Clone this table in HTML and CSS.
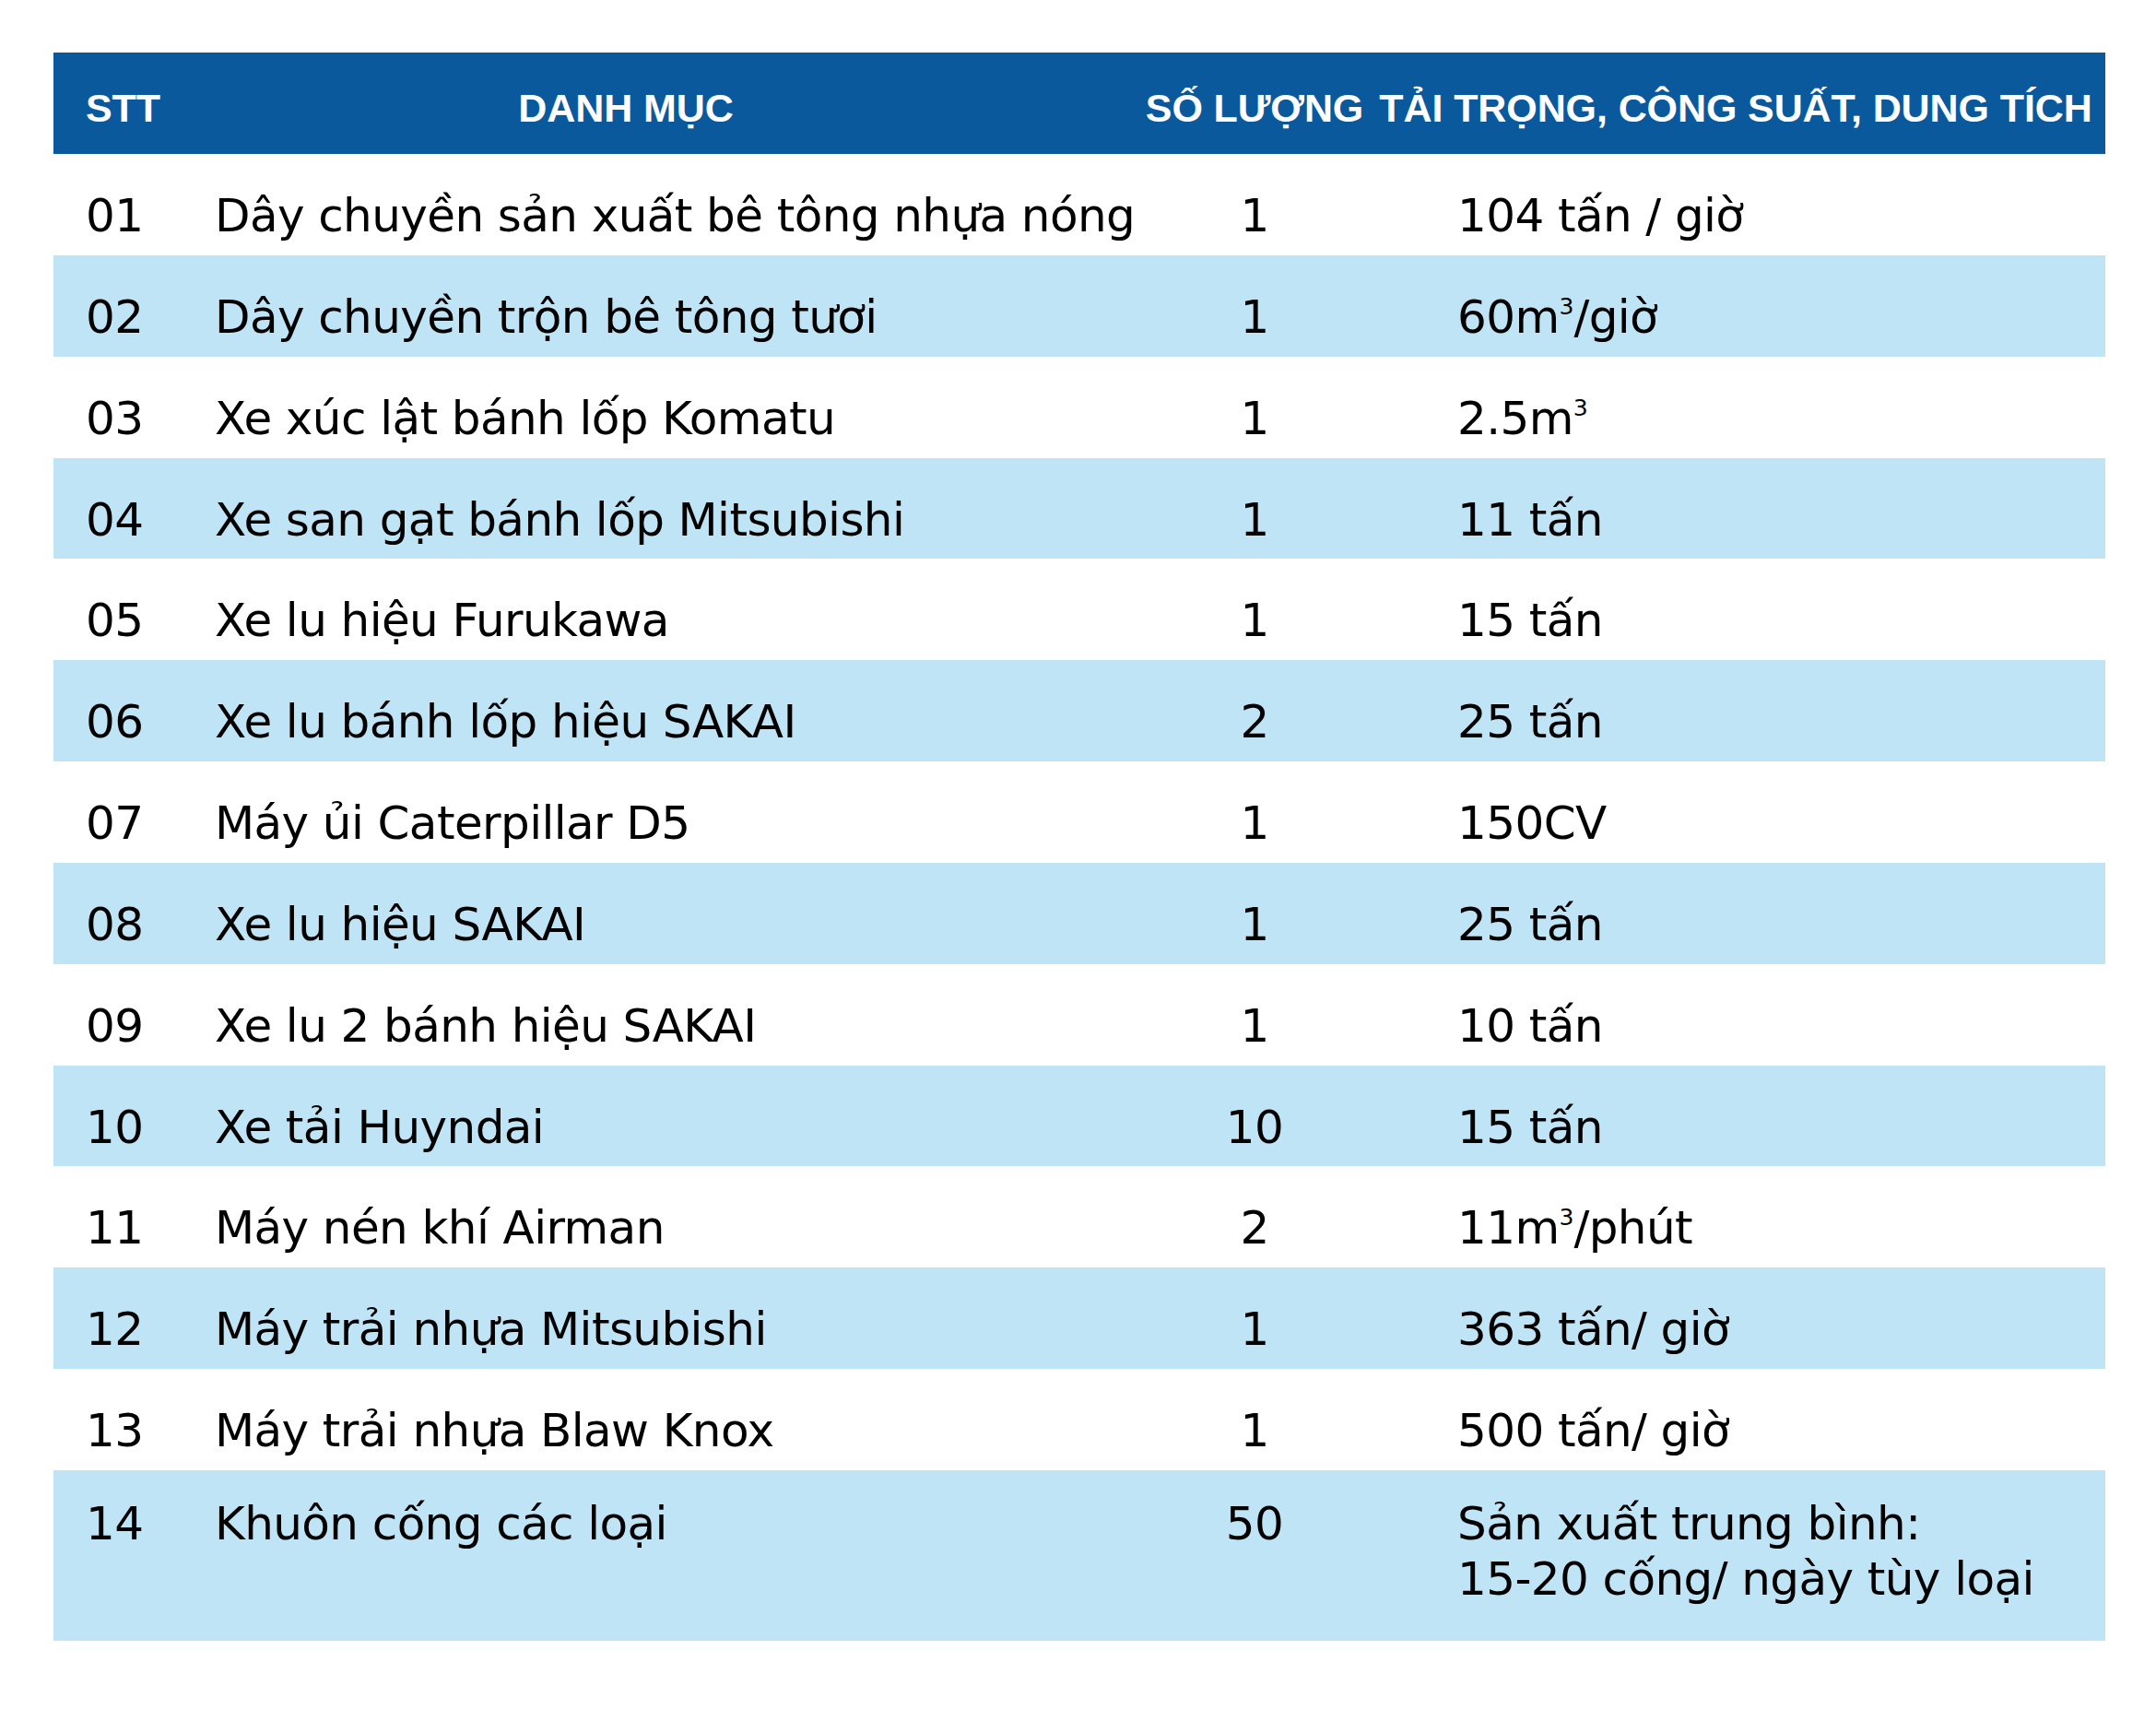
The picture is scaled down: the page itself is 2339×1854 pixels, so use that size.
FILE: index.html
```html
<!DOCTYPE html>
<html lang="vi">
<head>
<meta charset="utf-8">
<title>Danh mục thiết bị</title>
<link rel="stylesheet" href="styles.css">
</head>
<body>
<div class="table">
  <div class="row head">
    <div class="c1">STT</div>
    <div class="c2">DANH MỤC</div>
    <div class="c3">SỐ LƯỢNG</div>
    <div class="c4">TẢI TRỌNG, CÔNG SUẤT, DUNG TÍCH</div>
  </div>
  <div class="row"><div class="c1">01</div><div class="c2">Dây chuyền sản xuất bê tông nhựa nóng</div><div class="c3">1</div><div class="c4">104 tấn / giờ</div></div>
  <div class="row alt"><div class="c1">02</div><div class="c2">Dây chuyền trộn bê tông tươi</div><div class="c3">1</div><div class="c4">60m<span class="sup">3</span>/giờ</div></div>
  <div class="row"><div class="c1">03</div><div class="c2">Xe xúc lật bánh lốp Komatu</div><div class="c3">1</div><div class="c4">2.5m<span class="sup">3</span></div></div>
  <div class="row alt"><div class="c1">04</div><div class="c2">Xe san gạt bánh lốp Mitsubishi</div><div class="c3">1</div><div class="c4">11 tấn</div></div>
  <div class="row"><div class="c1">05</div><div class="c2">Xe lu hiệu Furukawa</div><div class="c3">1</div><div class="c4">15 tấn</div></div>
  <div class="row alt"><div class="c1">06</div><div class="c2">Xe lu bánh lốp hiệu SAKAI</div><div class="c3">2</div><div class="c4">25 tấn</div></div>
  <div class="row"><div class="c1">07</div><div class="c2">Máy ủi Caterpillar D5</div><div class="c3">1</div><div class="c4">150CV</div></div>
  <div class="row alt"><div class="c1">08</div><div class="c2">Xe lu hiệu SAKAI</div><div class="c3">1</div><div class="c4">25 tấn</div></div>
  <div class="row"><div class="c1">09</div><div class="c2">Xe lu 2 bánh hiệu SAKAI</div><div class="c3">1</div><div class="c4">10 tấn</div></div>
  <div class="row alt"><div class="c1">10</div><div class="c2">Xe tải Huyndai</div><div class="c3">10</div><div class="c4">15 tấn</div></div>
  <div class="row"><div class="c1">11</div><div class="c2">Máy nén khí Airman</div><div class="c3">2</div><div class="c4">11m<span class="sup">3</span>/phút</div></div>
  <div class="row alt"><div class="c1">12</div><div class="c2">Máy trải nhựa Mitsubishi</div><div class="c3">1</div><div class="c4">363 tấn/ giờ</div></div>
  <div class="row"><div class="c1">13</div><div class="c2">Máy trải nhựa Blaw Knox</div><div class="c3">1</div><div class="c4">500 tấn/ giờ</div></div>
  <div class="row alt tall"><div class="c1">14</div><div class="c2">Khuôn cống các loại</div><div class="c3">50</div><div class="c4">Sản xuất trung bình:<br>15-20 cống/ ngày tùy loại</div></div>
</div>
</body>
</html>
```

FILE: styles.css
```css
html, body {
  margin: 0;
  padding: 0;
  background: #ffffff;
}

body {
  font-family: "DejaVu Sans", "Liberation Sans", sans-serif;
  color: #000000;
}

.table {
  margin: 57px 0 0 58px;
  width: 2226px;
}

.row {
  display: grid;
  grid-template-columns: 142px 1040px 242px 802px;
  box-sizing: border-box;
  height: 109.85px;
  padding-top: 37px;
  font-size: 50px;
  letter-spacing: -0.6px;
  line-height: 60px;
  white-space: nowrap;
}

.row.alt {
  background: #bee4f5;
}

.row.tall {
  height: 185px;
  padding-top: 28px;
}

.c1 {
  padding-left: 35px;
}

.c2 {
  padding-left: 33px;
}

.c3 {
  text-align: center;
}

.c4 {
  padding-left: 99px;
}

.row.head {
  height: 110px;
  padding-top: 35px;
  background: #0b599d;
  color: #ffffff;
  font-family: "Liberation Sans", Arial, sans-serif;
  font-weight: 700;
  font-size: 43px;
  line-height: 50px;
  letter-spacing: -0.1px;
}

.row.head .c1 {
  padding-left: 35px;
}

.row.head .c2 {
  padding-left: 0;
  padding-right: 82px;
  text-align: center;
}

.row.head .c4 {
  padding-left: 0;
  text-align: center;
}

.sup {
  font-size: 0.5em;
  letter-spacing: 0;
  vertical-align: 0.8em;
  line-height: 0;
}
```
